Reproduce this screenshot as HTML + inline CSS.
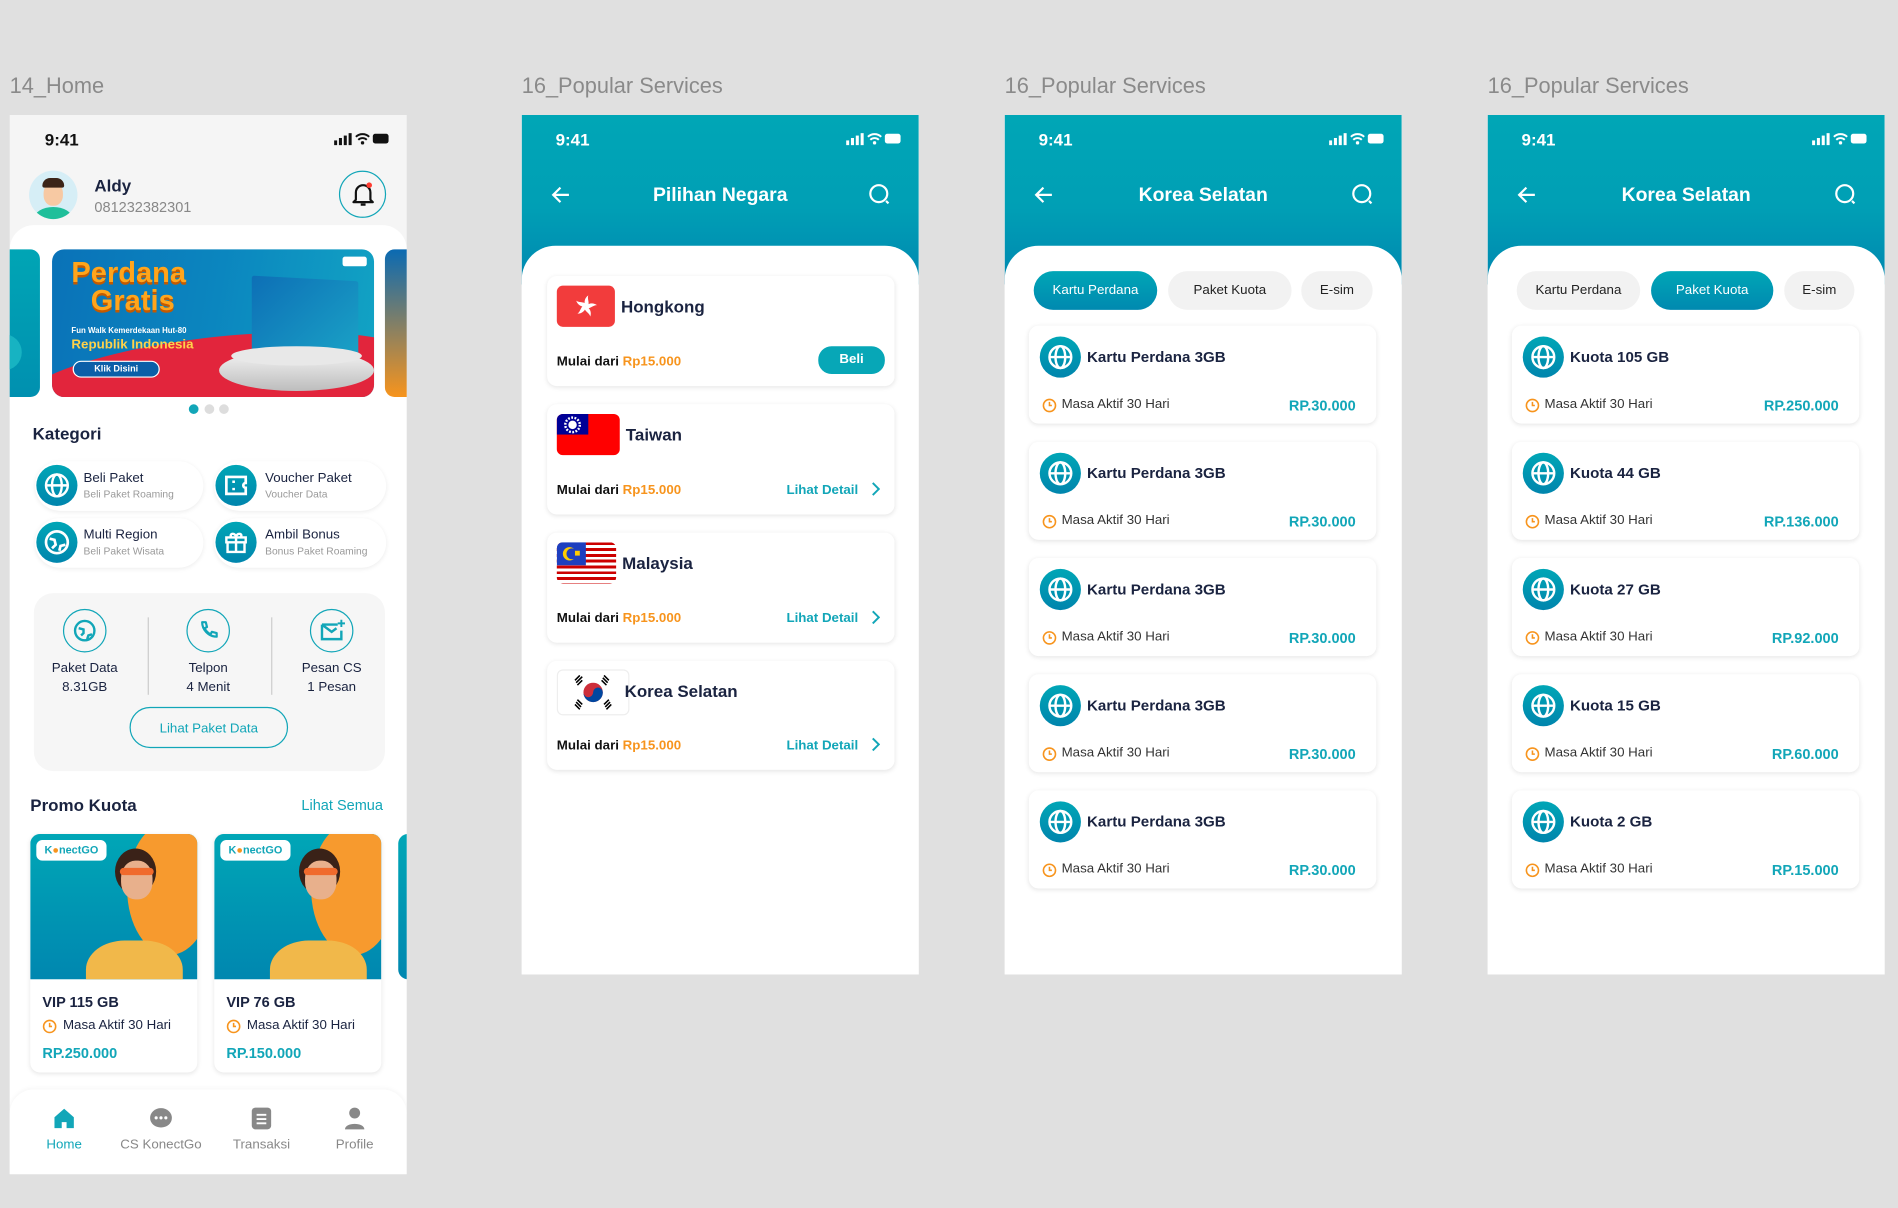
<!DOCTYPE html>
<html><head><meta charset="utf-8"><style>
*{box-sizing:border-box;margin:0;padding:0}
html,body{width:1898px;height:1208px;overflow:hidden;background:#e0e0e0;font-family:"Liberation Sans",sans-serif}
#w{position:absolute;left:0;top:0;width:1568px;height:998px;transform:scale(1.21046);transform-origin:0 0}
.a{position:absolute}
.lbl{font-size:18px;color:#8a8a8a;top:61px}
.ph{position:absolute;top:95px;width:328px;overflow:hidden;background:#fff}
.hdr{position:absolute;left:0;top:0;width:328px;height:140px;background:linear-gradient(#00a6b6 0%,#009fb5 55%,#0087b0 100%)}
.time{position:absolute;top:12px;left:28px;font-size:14px;font-weight:bold;color:#fff}
.ttl{position:absolute;top:58px;left:0;width:328px;text-align:center;font-size:16px;font-weight:bold;color:#fff}
.panel{position:absolute;left:0;top:108px;width:328px;height:700px;background:#fff;border-radius:28px 28px 0 0}
.card{position:absolute;left:21px;width:287px;background:#fff;border-radius:8px;box-shadow:0 1px 4px rgba(0,0,0,.1)}
.flag{position:absolute;left:8px;top:8px;width:48px;height:34px;border-radius:5px;overflow:hidden}
.cn{position:absolute;top:17px;font-size:14px;font-weight:bold;color:#1a2340}
.mul{position:absolute;left:8px;bottom:14px;font-size:11px;font-weight:bold;color:#111}
.mul span{color:#f7941d}
.ld{position:absolute;right:30px;bottom:14px;font-size:11px;font-weight:bold;color:#12a6b8}
.chev{position:absolute;right:12px;bottom:15px}
.tab{position:absolute;top:129px;height:32px;border-radius:16px;font-size:11px;line-height:32px;text-align:center;color:#222;background:#f2f2f2}
.tab.on{background:linear-gradient(#00a6b6,#0089b0);color:#fff}
.pc{position:absolute;left:20px;width:287px;height:81px;background:#fff;border-radius:8px;box-shadow:0 1px 4px rgba(0,0,0,.1)}
.gi{position:absolute;left:9px;top:9px;width:34px;height:34px;border-radius:50%;background:linear-gradient(#00a6b6,#0085ad)}
.pt{position:absolute;left:48px;top:19px;font-size:12.5px;font-weight:bold;color:#1a2340}
.ma{position:absolute;left:27px;top:59px;font-size:11px;color:#333}
.clk{position:absolute;left:11px;top:60px}
.pr{position:absolute;right:17px;top:59px;font-size:12px;font-weight:bold;color:#12a6b8}
.st{position:absolute;right:14px;top:14px}
</style></head><body><div id="w">

<div class="a lbl" style="left:8px">14_Home</div>
<div class="a lbl" style="left:431px">16_Popular Services</div>
<div class="a lbl" style="left:830px">16_Popular Services</div>
<div class="a lbl" style="left:1229px">16_Popular Services</div>

<!-- PHONE 1 -->
<div class="ph" style="left:8px;height:875px;background:#f5f5f5">
 <div class="time" style="color:#111;left:29px">9:41</div>
 <svg class="st" width="46" height="11" viewBox="0 0 46 11"><rect x="0" y="7" width="2.5" height="4" fill="#111"/><rect x="4" y="5" width="2.5" height="6" fill="#111"/><rect x="8" y="3" width="2.5" height="8" fill="#111"/><rect x="12" y="1" width="2.5" height="10" fill="#111"/><path d="M18 4a8 8 0 0 1 11 0M20 6.5a5 5 0 0 1 7 0" stroke="#111" stroke-width="1.6" fill="none"/><circle cx="23.5" cy="9" r="1.4" fill="#111"/><rect x="32" y="1.5" width="13" height="8" rx="2" fill="#111"/></svg>
 <div class="a" style="left:16px;top:46px;width:40px;height:40px;border-radius:50%;background:#d6eef6;overflow:hidden">
  <div class="a" style="left:4px;top:30px;width:32px;height:20px;border-radius:50%;background:#1fbf9a"></div>
  <div class="a" style="left:12px;top:10px;width:16px;height:19px;border-radius:45%;background:#f7c9a3"></div>
  <div class="a" style="left:11px;top:6px;width:18px;height:8px;border-radius:8px 8px 2px 2px;background:#3b2418"></div>
 </div>
 <div class="a" style="left:70px;top:50px;font-size:14px;font-weight:bold;color:#1a2340">Aldy</div>
 <div class="a" style="left:70px;top:69px;font-size:12px;color:#888">081232382301</div>
 <div class="a" style="left:272px;top:46px;width:39px;height:39px;border-radius:50%;border:1.5px solid #12a6b8">
  <svg class="a" style="left:9px;top:8px" width="20" height="22" viewBox="0 0 20 22"><path d="M4 15V9a6 6 0 0 1 12 0v6l2 2H2z" fill="none" stroke="#111" stroke-width="1.8" stroke-linejoin="round"/><path d="M8 19h4" stroke="#111" stroke-width="2"/><circle cx="15" cy="3" r="2.3" fill="#ff3b30"/></svg>
 </div>
 <div class="a" style="left:0;top:91px;width:328px;height:800px;background:#fff;border-radius:20px 20px 0 0"></div>
 <!-- banner -->
 <div class="a" style="left:-10px;top:111px;width:35px;height:122px;border-radius:8px;background:linear-gradient(#00a5b5,#0090b0)"><div class="a" style="left:-10px;top:70px;width:30px;height:30px;border-radius:50%;background:#17b3c2"></div></div>
 <div class="a" style="left:35px;top:111px;width:266px;height:122px;border-radius:10px;overflow:hidden;background:linear-gradient(100deg,#0a72b8,#0b86bf 50%,#12a4c4)">
  <div class="a" style="left:-30px;top:72px;width:340px;height:80px;border-radius:50%;background:#e2253c;transform:rotate(-6deg)"></div>
  <div class="a" style="left:16px;top:8px;font-size:24px;font-weight:bold;color:#ffa51c;line-height:24px;text-shadow:0 2px 0 #c45a00">Perdana</div>
  <div class="a" style="left:32px;top:31px;font-size:24px;font-weight:bold;color:#ffa51c;line-height:24px;text-shadow:0 2px 0 #c45a00">Gratis</div>
  <div class="a" style="left:16px;top:64px;font-size:6.5px;font-weight:bold;color:#fff">Fun Walk Kemerdekaan Hut-80</div>
  <div class="a" style="left:16px;top:73px;font-size:11px;font-weight:bold;color:#ffd24a">Republik Indonesia</div>
  <div class="a" style="left:17px;top:92px;width:72px;height:14px;border-radius:7px;background:#0b5fa8;border:1px solid #fff;font-size:7.5px;font-weight:bold;color:#fff;text-align:center;line-height:12px">Klik Disini</div>
  <div class="a" style="left:165px;top:24px;width:88px;height:62px;background:linear-gradient(135deg,#0d6fb6,#1aa2c6);transform:skewY(3deg);border-radius:2px"></div>
  <div class="a" style="left:138px;top:83px;width:128px;height:34px;border-radius:50%;background:linear-gradient(#f5f5f5,#bdbdbd)"></div>
  <div class="a" style="left:148px;top:80px;width:108px;height:16px;border-radius:50%;background:#e8e8e8"></div>
  <div class="a" style="left:240px;top:6px;width:20px;height:8px;background:#fff;border-radius:2px"></div>
 </div>
 <div class="a" style="left:310px;top:111px;width:30px;height:122px;border-radius:8px;background:linear-gradient(#0a6ab2,#f7941d)"></div>
 <div class="a" style="left:148px;top:239px;width:8px;height:8px;border-radius:50%;background:#12a6b8"></div>
 <div class="a" style="left:161px;top:239px;width:8px;height:8px;border-radius:50%;background:#ddd"></div>
 <div class="a" style="left:173px;top:239px;width:8px;height:8px;border-radius:50%;background:#ddd"></div>
 <div class="a" style="left:19px;top:255px;font-size:14px;font-weight:bold;color:#1a2340">Kategori</div>
 <!-- category pills -->
 <div class="a" style="left:21px;top:286px;width:139px;height:41px;border-radius:21px;background:#fff;box-shadow:0 1px 4px rgba(0,0,0,.08)">
  <div class="gi" style="left:1px;top:3px"><svg width="34" height="34" viewBox="0 0 34 34"><g fill="none" stroke="#fff" stroke-width="2"><circle cx="17" cy="17" r="9"/><ellipse cx="17" cy="17" rx="4" ry="9"/><path d="M8 17h18"/></g></svg></div>
  <div class="a" style="left:40px;top:8px;font-size:11px;color:#1a2340">Beli Paket</div><div class="a" style="left:40px;top:22px;font-size:8.5px;color:#999">Beli Paket Roaming</div></div>
 <div class="a" style="left:169px;top:286px;width:142px;height:41px;border-radius:21px;background:#fff;box-shadow:0 1px 4px rgba(0,0,0,.08)">
  <div class="gi" style="left:1px;top:3px"><svg width="34" height="34" viewBox="0 0 34 34"><path d="M9 10h16v5a2 2 0 0 0 0 4v5H9z M15 13v2M15 19v2" fill="none" stroke="#fff" stroke-width="2.2"/></svg></div>
  <div class="a" style="left:42px;top:8px;font-size:11px;color:#1a2340">Voucher Paket</div><div class="a" style="left:42px;top:22px;font-size:8.5px;color:#999">Voucher Data</div></div>
 <div class="a" style="left:21px;top:333px;width:139px;height:41px;border-radius:21px;background:#fff;box-shadow:0 1px 4px rgba(0,0,0,.08)">
  <div class="gi" style="left:1px;top:3px"><svg width="34" height="34" viewBox="0 0 34 34"><circle cx="17" cy="17" r="9" fill="none" stroke="#fff" stroke-width="2.2"/><path d="M11 14l4 1 1 4-3 3M19 24l1-4 4-1" fill="none" stroke="#fff" stroke-width="2.2"/></svg></div>
  <div class="a" style="left:40px;top:8px;font-size:11px;color:#1a2340">Multi Region</div><div class="a" style="left:40px;top:22px;font-size:8.5px;color:#999">Beli Paket Wisata</div></div>
 <div class="a" style="left:169px;top:333px;width:142px;height:41px;border-radius:21px;background:#fff;box-shadow:0 1px 4px rgba(0,0,0,.08)">
  <div class="gi" style="left:1px;top:3px"><svg width="34" height="34" viewBox="0 0 34 34"><path d="M9 13h16v4H9zM10 17h14v8H10zM17 13v12M13 13c-2-4 4-4 4 0c0-4 6-4 4 0" fill="none" stroke="#fff" stroke-width="2"/></svg></div>
  <div class="a" style="left:42px;top:8px;font-size:11px;color:#1a2340">Ambil Bonus</div><div class="a" style="left:42px;top:22px;font-size:8.5px;color:#999">Bonus Paket Roaming</div></div>
 <!-- stats -->
 <div class="a" style="left:20px;top:395px;width:290px;height:147px;border-radius:16px;background:#f6f6f6">
  <div class="a" style="left:94px;top:20px;width:1px;height:64px;background:#ccc"></div>
  <div class="a" style="left:196px;top:20px;width:1px;height:64px;background:#ccc"></div>
  <div class="a" style="left:24px;top:13px;width:36px;height:36px;border-radius:50%;border:1.3px solid #12a6b8"><svg width="34" height="34" viewBox="0 0 34 34"><circle cx="17" cy="17" r="8" fill="none" stroke="#12a6b8" stroke-width="2"/><path d="M12 15l4 1 0 3-2 2M19 24l1-3 3-1" fill="none" stroke="#12a6b8" stroke-width="2"/></svg></div>
  <div class="a" style="left:126px;top:13px;width:36px;height:36px;border-radius:50%;border:1.3px solid #12a6b8"><svg width="34" height="34" viewBox="0 0 34 34"><path d="M12 10l3 0 1 4-2 1c1 2 3 4 5 5l1-2 4 1v3c-7 0-12-6-12-12z" fill="none" stroke="#12a6b8" stroke-width="1.8" stroke-linejoin="round"/></svg></div>
  <div class="a" style="left:228px;top:13px;width:36px;height:36px;border-radius:50%;border:1.3px solid #12a6b8"><svg width="34" height="34" viewBox="0 0 34 34"><path d="M9 12h13M9 12v12h16v-7M9 12l8 6 4-3" fill="none" stroke="#12a6b8" stroke-width="2"/><path d="M25 8v6M22 11h6" stroke="#12a6b8" stroke-width="1.6"/></svg></div>
  <div class="a" style="left:0;top:54px;width:84px;text-align:center;font-size:11px;color:#1a2340;line-height:16px">Paket Data<br>8.31GB</div>
  <div class="a" style="left:104px;top:54px;width:80px;text-align:center;font-size:11px;color:#1a2340;line-height:16px">Telpon<br>4 Menit</div>
  <div class="a" style="left:206px;top:54px;width:80px;text-align:center;font-size:11px;color:#1a2340;line-height:16px">Pesan CS<br>1 Pesan</div>
  <div class="a" style="left:79px;top:94px;width:131px;height:34px;border-radius:18px;border:1.3px solid #12a6b8;text-align:center;line-height:34px;font-size:11px;color:#12a6b8">Lihat Paket Data</div>
 </div>
 <div class="a" style="left:17px;top:562px;font-size:14px;font-weight:bold;color:#1a2340">Promo Kuota</div>
 <div class="a" style="left:241px;top:563px;font-size:12px;color:#12a6b8">Lihat Semua</div>
 <!-- promo cards -->
 <div class="a" style="left:17px;top:594px;width:138px;height:197px;border-radius:8px;background:#fff;box-shadow:0 1px 4px rgba(0,0,0,.1);overflow:hidden">
  <div class="a" style="left:0;top:0;width:138px;height:120px;background:linear-gradient(#00a6b6,#0087b0);overflow:hidden">
   <div class="a" style="left:80px;top:-10px;width:70px;height:110px;border-radius:50%;background:#f79a2e"></div>
   <div class="a" style="left:46px;top:88px;width:80px;height:60px;border-radius:40% 40% 0 0;background:#f1b84a"></div>
   <div class="a" style="left:70px;top:12px;width:34px;height:38px;border-radius:50%;background:#3a2218"></div>
   <div class="a" style="left:75px;top:22px;width:26px;height:32px;border-radius:45%;background:#e8b08c"></div>
   <div class="a" style="left:74px;top:28px;width:28px;height:6px;background:#f06a2c;border-radius:3px"></div>
   <div class="a" style="left:5px;top:5px;width:58px;height:17px;border-radius:5px;background:#fff;font-size:9px;font-weight:bold;color:#12a6b8;text-align:center;line-height:17px">K<span style="color:#f7941d">●</span>nectGO</div>
  </div>
  <div class="a" style="left:10px;top:132px;font-size:12px;font-weight:bold;color:#1a2340">VIP 115 GB</div>
  <svg class="a" style="left:10px;top:153px" width="12" height="12" viewBox="0 0 12 12"><circle cx="6" cy="6" r="5" fill="none" stroke="#f7941d" stroke-width="1.3"/><path d="M6 3v3h2" fill="none" stroke="#f7941d" stroke-width="1.3"/></svg>
  <div class="a" style="left:27px;top:152px;font-size:11px;color:#1a2340">Masa Aktif 30 Hari</div>
  <div class="a" style="left:10px;top:174px;font-size:12px;font-weight:bold;color:#12a6b8">RP.250.000</div>
 </div>
 <div class="a" style="left:169px;top:594px;width:138px;height:197px;border-radius:8px;background:#fff;box-shadow:0 1px 4px rgba(0,0,0,.1);overflow:hidden">
  <div class="a" style="left:0;top:0;width:138px;height:120px;background:linear-gradient(#00a6b6,#0087b0);overflow:hidden">
   <div class="a" style="left:80px;top:-10px;width:70px;height:110px;border-radius:50%;background:#f79a2e"></div>
   <div class="a" style="left:46px;top:88px;width:80px;height:60px;border-radius:40% 40% 0 0;background:#f1b84a"></div>
   <div class="a" style="left:70px;top:12px;width:34px;height:38px;border-radius:50%;background:#3a2218"></div>
   <div class="a" style="left:75px;top:22px;width:26px;height:32px;border-radius:45%;background:#e8b08c"></div>
   <div class="a" style="left:74px;top:28px;width:28px;height:6px;background:#f06a2c;border-radius:3px"></div>
   <div class="a" style="left:5px;top:5px;width:58px;height:17px;border-radius:5px;background:#fff;font-size:9px;font-weight:bold;color:#12a6b8;text-align:center;line-height:17px">K<span style="color:#f7941d">●</span>nectGO</div>
  </div>
  <div class="a" style="left:10px;top:132px;font-size:12px;font-weight:bold;color:#1a2340">VIP 76 GB</div>
  <svg class="a" style="left:10px;top:153px" width="12" height="12" viewBox="0 0 12 12"><circle cx="6" cy="6" r="5" fill="none" stroke="#f7941d" stroke-width="1.3"/><path d="M6 3v3h2" fill="none" stroke="#f7941d" stroke-width="1.3"/></svg>
  <div class="a" style="left:27px;top:152px;font-size:11px;color:#1a2340">Masa Aktif 30 Hari</div>
  <div class="a" style="left:10px;top:174px;font-size:12px;font-weight:bold;color:#12a6b8">RP.150.000</div>
 </div>
 <div class="a" style="left:321px;top:594px;width:20px;height:120px;border-radius:8px;background:linear-gradient(#00a6b6,#0087b0)"></div>
 <!-- nav -->
 <div class="a" style="left:0;top:805px;width:328px;height:80px;background:#fff;border-radius:20px 20px 0 0;box-shadow:0 -1px 4px rgba(0,0,0,.04)">
  <svg class="a" style="left:35px;top:14px" width="20" height="20" viewBox="0 0 20 20"><path d="M2 9l8-7 8 7v9h-6v-5h-4v5H2z" fill="#12a6b8"/></svg>
  <svg class="a" style="left:115px;top:14px" width="20" height="20" viewBox="0 0 20 20"><ellipse cx="10" cy="9.5" rx="9" ry="8" fill="#888"/><circle cx="6" cy="9.5" r="1.3" fill="#fff"/><circle cx="10" cy="9.5" r="1.3" fill="#fff"/><circle cx="14" cy="9.5" r="1.3" fill="#fff"/></svg>
  <svg class="a" style="left:198px;top:14px" width="20" height="20" viewBox="0 0 20 20"><rect x="2" y="1" width="16" height="18" rx="3" fill="#888"/><path d="M6 7h8M6 10.5h8M6 14h8" stroke="#fff" stroke-width="1.5"/></svg>
  <svg class="a" style="left:275px;top:14px" width="20" height="20" viewBox="0 0 20 20"><circle cx="10" cy="5.5" r="4.5" fill="#888"/><path d="M2 19c0-6 16-6 16 0z" fill="#888"/></svg>
  <div class="a" style="left:10px;top:40px;width:70px;text-align:center;font-size:11px;color:#12a6b8">Home</div>
  <div class="a" style="left:85px;top:40px;width:80px;text-align:center;font-size:11px;color:#888">CS KonectGo</div>
  <div class="a" style="left:168px;top:40px;width:80px;text-align:center;font-size:11px;color:#888">Transaksi</div>
  <div class="a" style="left:250px;top:40px;width:70px;text-align:center;font-size:11px;color:#888">Profile</div>
 </div>
</div>

<!-- PHONE 2 -->
<div class="ph" style="left:431px;height:710px">
 <div class="hdr"></div>
 <div class="time">9:41</div>
 <svg class="st" width="46" height="11" viewBox="0 0 46 11"><rect x="0" y="7" width="2.5" height="4" fill="#fff"/><rect x="4" y="5" width="2.5" height="6" fill="#fff"/><rect x="8" y="3" width="2.5" height="8" fill="#fff"/><rect x="12" y="1" width="2.5" height="10" fill="#fff"/><path d="M18 4a8 8 0 0 1 11 0M20 6.5a5 5 0 0 1 7 0" stroke="#fff" stroke-width="1.6" fill="none"/><circle cx="23.5" cy="9" r="1.4" fill="#fff"/><rect x="32" y="1.5" width="13" height="8" rx="2" fill="#fff"/></svg>
 <svg class="a" style="left:23px;top:58px" width="18" height="16" viewBox="0 0 18 16"><path d="M16 8H3M9 2L3 8l6 6" fill="none" stroke="#fff" stroke-width="1.8"/></svg>
 <div class="ttl">Pilihan Negara</div>
 <svg class="a" style="left:286px;top:56px" width="20" height="20" viewBox="0 0 20 20"><circle cx="9" cy="9" r="7" fill="none" stroke="#fff" stroke-width="1.8"/><path d="M15 15l2 2" stroke="#fff" stroke-width="1.8"/></svg>
 <div class="panel"></div>
 <div class="card" style="top:133px;height:91px">
  <div class="flag" style="background:#f23c3c"><svg width="48" height="34" viewBox="0 0 48 34"><g fill="#fff" transform="translate(24 17)"><g id="pt"><path d="M0 0c-2-3-1-7 2-9c-1 3 1 5 0 9z"/></g><use href="#pt" transform="rotate(72)"/><use href="#pt" transform="rotate(144)"/><use href="#pt" transform="rotate(216)"/><use href="#pt" transform="rotate(288)"/></g></svg></div>
  <div class="cn" style="left:61px">Hongkong</div>
  <div class="mul">Mulai dari <span>Rp15.000</span></div>
  <div class="a" style="right:8px;bottom:10px;width:55px;height:23px;border-radius:11px;background:#07a7b7;color:#fff;font-size:11px;font-weight:bold;text-align:center;line-height:23px">Beli</div>
 </div>
 <div class="card" style="top:239px;height:91px">
  <div class="flag" style="background:#f00;width:52px"><div class="a" style="left:0;top:0;width:26px;height:17px;background:#000096"></div><svg class="a" style="left:5px;top:1px" width="16" height="16" viewBox="0 0 16 16"><circle cx="8" cy="8" r="3.5" fill="#fff"/><circle cx="8" cy="8" r="6" fill="none" stroke="#fff" stroke-width="2" stroke-dasharray="1.5 1.2"/></svg></div>
  <div class="cn" style="left:65px">Taiwan</div>
  <div class="mul">Mulai dari <span>Rp15.000</span></div>
  <div class="ld">Lihat Detail</div>
  <svg class="chev" width="8" height="12" viewBox="0 0 8 12"><path d="M2 1l5 5-5 5" fill="none" stroke="#12a6b8" stroke-width="1.6"/></svg>
 </div>
 <div class="card" style="top:345px;height:91px">
  <div class="flag" style="background:repeating-linear-gradient(#c00 0 2.4px,#fff 2.4px 4.8px);width:49px;height:34px"><div class="a" style="left:0;top:0;width:24px;height:19px;background:#1e3fbf"></div><div class="a" style="left:5px;top:4px;width:11px;height:11px;border-radius:50%;background:#fc0"></div><div class="a" style="left:8px;top:5px;width:9px;height:9px;border-radius:50%;background:#1e3fbf"></div><div class="a" style="left:15px;top:7px;width:4px;height:4px;background:#fc0"></div></div>
  <div class="cn" style="left:62px">Malaysia</div>
  <div class="mul">Mulai dari <span>Rp15.000</span></div>
  <div class="ld">Lihat Detail</div>
  <svg class="chev" width="8" height="12" viewBox="0 0 8 12"><path d="M2 1l5 5-5 5" fill="none" stroke="#12a6b8" stroke-width="1.6"/></svg>
 </div>
 <div class="card" style="top:451px;height:90px">
  <div class="flag" style="background:#fff;border:1px solid #eee;width:60px;height:38px;top:7px"><svg width="58" height="36" viewBox="0 0 58 36"><circle cx="29" cy="18" r="8" fill="#cd2e3a"/><path d="M21 18a8 8 0 0 0 16 0a4 4 0 0 0-8 0a4 4 0 0 1-8 0z" fill="#0047a0"/><g stroke="#000" stroke-width="1.3"><path d="M14 8l4-4M15 10l5-5M16 12l4-4M38 4l4 4M37 6l4 4M36 8l4 4M14 28l4 4M15 26l4 4M16 24l4 4M38 28l4-4M39 30l4-4M40 32l4-4"/></g></svg></div>
  <div class="cn" style="left:64px">Korea Selatan</div>
  <div class="mul">Mulai dari <span>Rp15.000</span></div>
  <div class="ld">Lihat Detail</div>
  <svg class="chev" width="8" height="12" viewBox="0 0 8 12"><path d="M2 1l5 5-5 5" fill="none" stroke="#12a6b8" stroke-width="1.6"/></svg>
 </div>
</div>

<!-- PHONE 3 -->
<div class="ph" style="left:830px;height:710px">
 <div class="hdr"></div>
 <div class="time">9:41</div>
 <svg class="st" width="46" height="11" viewBox="0 0 46 11"><rect x="0" y="7" width="2.5" height="4" fill="#fff"/><rect x="4" y="5" width="2.5" height="6" fill="#fff"/><rect x="8" y="3" width="2.5" height="8" fill="#fff"/><rect x="12" y="1" width="2.5" height="10" fill="#fff"/><path d="M18 4a8 8 0 0 1 11 0M20 6.5a5 5 0 0 1 7 0" stroke="#fff" stroke-width="1.6" fill="none"/><circle cx="23.5" cy="9" r="1.4" fill="#fff"/><rect x="32" y="1.5" width="13" height="8" rx="2" fill="#fff"/></svg>
 <svg class="a" style="left:23px;top:58px" width="18" height="16" viewBox="0 0 18 16"><path d="M16 8H3M9 2L3 8l6 6" fill="none" stroke="#fff" stroke-width="1.8"/></svg>
 <div class="ttl">Korea Selatan</div>
 <svg class="a" style="left:286px;top:56px" width="20" height="20" viewBox="0 0 20 20"><circle cx="9" cy="9" r="7" fill="none" stroke="#fff" stroke-width="1.8"/><path d="M15 15l2 2" stroke="#fff" stroke-width="1.8"/></svg>
 <div class="panel"></div>
 <div class="tab on" style="left:24px;width:102px">Kartu Perdana</div>
 <div class="tab" style="left:135px;width:102px">Paket Kuota</div>
 <div class="tab" style="left:245px;width:59px">E-sim</div>
 <div class="pc" style="top:174px"><div class="gi"><svg width="34" height="34" viewBox="0 0 34 34"><g fill="none" stroke="#fff" stroke-width="2"><circle cx="17" cy="17" r="9"/><ellipse cx="17" cy="17" rx="4" ry="9"/><path d="M8 17h18"/></g></svg></div><div class="pt">Kartu Perdana 3GB</div><svg class="clk" width="12" height="12" viewBox="0 0 12 12"><circle cx="6" cy="6" r="5" fill="none" stroke="#f7941d" stroke-width="1.3"/><path d="M6 3v3h2" fill="none" stroke="#f7941d" stroke-width="1.3"/></svg><div class="ma">Masa Aktif 30 Hari</div><div class="pr">RP.30.000</div></div>
 <div class="pc" style="top:270px"><div class="gi"><svg width="34" height="34" viewBox="0 0 34 34"><g fill="none" stroke="#fff" stroke-width="2"><circle cx="17" cy="17" r="9"/><ellipse cx="17" cy="17" rx="4" ry="9"/><path d="M8 17h18"/></g></svg></div><div class="pt">Kartu Perdana 3GB</div><svg class="clk" width="12" height="12" viewBox="0 0 12 12"><circle cx="6" cy="6" r="5" fill="none" stroke="#f7941d" stroke-width="1.3"/><path d="M6 3v3h2" fill="none" stroke="#f7941d" stroke-width="1.3"/></svg><div class="ma">Masa Aktif 30 Hari</div><div class="pr">RP.30.000</div></div>
 <div class="pc" style="top:366px"><div class="gi"><svg width="34" height="34" viewBox="0 0 34 34"><g fill="none" stroke="#fff" stroke-width="2"><circle cx="17" cy="17" r="9"/><ellipse cx="17" cy="17" rx="4" ry="9"/><path d="M8 17h18"/></g></svg></div><div class="pt">Kartu Perdana 3GB</div><svg class="clk" width="12" height="12" viewBox="0 0 12 12"><circle cx="6" cy="6" r="5" fill="none" stroke="#f7941d" stroke-width="1.3"/><path d="M6 3v3h2" fill="none" stroke="#f7941d" stroke-width="1.3"/></svg><div class="ma">Masa Aktif 30 Hari</div><div class="pr">RP.30.000</div></div>
 <div class="pc" style="top:462px"><div class="gi"><svg width="34" height="34" viewBox="0 0 34 34"><g fill="none" stroke="#fff" stroke-width="2"><circle cx="17" cy="17" r="9"/><ellipse cx="17" cy="17" rx="4" ry="9"/><path d="M8 17h18"/></g></svg></div><div class="pt">Kartu Perdana 3GB</div><svg class="clk" width="12" height="12" viewBox="0 0 12 12"><circle cx="6" cy="6" r="5" fill="none" stroke="#f7941d" stroke-width="1.3"/><path d="M6 3v3h2" fill="none" stroke="#f7941d" stroke-width="1.3"/></svg><div class="ma">Masa Aktif 30 Hari</div><div class="pr">RP.30.000</div></div>
 <div class="pc" style="top:558px"><div class="gi"><svg width="34" height="34" viewBox="0 0 34 34"><g fill="none" stroke="#fff" stroke-width="2"><circle cx="17" cy="17" r="9"/><ellipse cx="17" cy="17" rx="4" ry="9"/><path d="M8 17h18"/></g></svg></div><div class="pt">Kartu Perdana 3GB</div><svg class="clk" width="12" height="12" viewBox="0 0 12 12"><circle cx="6" cy="6" r="5" fill="none" stroke="#f7941d" stroke-width="1.3"/><path d="M6 3v3h2" fill="none" stroke="#f7941d" stroke-width="1.3"/></svg><div class="ma">Masa Aktif 30 Hari</div><div class="pr">RP.30.000</div></div>
</div>

<!-- PHONE 4 -->
<div class="ph" style="left:1229px;height:710px">
 <div class="hdr"></div>
 <div class="time">9:41</div>
 <svg class="st" width="46" height="11" viewBox="0 0 46 11"><rect x="0" y="7" width="2.5" height="4" fill="#fff"/><rect x="4" y="5" width="2.5" height="6" fill="#fff"/><rect x="8" y="3" width="2.5" height="8" fill="#fff"/><rect x="12" y="1" width="2.5" height="10" fill="#fff"/><path d="M18 4a8 8 0 0 1 11 0M20 6.5a5 5 0 0 1 7 0" stroke="#fff" stroke-width="1.6" fill="none"/><circle cx="23.5" cy="9" r="1.4" fill="#fff"/><rect x="32" y="1.5" width="13" height="8" rx="2" fill="#fff"/></svg>
 <svg class="a" style="left:23px;top:58px" width="18" height="16" viewBox="0 0 18 16"><path d="M16 8H3M9 2L3 8l6 6" fill="none" stroke="#fff" stroke-width="1.8"/></svg>
 <div class="ttl">Korea Selatan</div>
 <svg class="a" style="left:286px;top:56px" width="20" height="20" viewBox="0 0 20 20"><circle cx="9" cy="9" r="7" fill="none" stroke="#fff" stroke-width="1.8"/><path d="M15 15l2 2" stroke="#fff" stroke-width="1.8"/></svg>
 <div class="panel"></div>
 <div class="tab" style="left:24px;width:102px">Kartu Perdana</div>
 <div class="tab on" style="left:135px;width:101px">Paket Kuota</div>
 <div class="tab" style="left:245px;width:58px">E-sim</div>
 <div class="pc" style="top:174px"><div class="gi"><svg width="34" height="34" viewBox="0 0 34 34"><g fill="none" stroke="#fff" stroke-width="2"><circle cx="17" cy="17" r="9"/><ellipse cx="17" cy="17" rx="4" ry="9"/><path d="M8 17h18"/></g></svg></div><div class="pt">Kuota 105 GB</div><svg class="clk" width="12" height="12" viewBox="0 0 12 12"><circle cx="6" cy="6" r="5" fill="none" stroke="#f7941d" stroke-width="1.3"/><path d="M6 3v3h2" fill="none" stroke="#f7941d" stroke-width="1.3"/></svg><div class="ma">Masa Aktif 30 Hari</div><div class="pr">RP.250.000</div></div>
 <div class="pc" style="top:270px"><div class="gi"><svg width="34" height="34" viewBox="0 0 34 34"><g fill="none" stroke="#fff" stroke-width="2"><circle cx="17" cy="17" r="9"/><ellipse cx="17" cy="17" rx="4" ry="9"/><path d="M8 17h18"/></g></svg></div><div class="pt">Kuota 44 GB</div><svg class="clk" width="12" height="12" viewBox="0 0 12 12"><circle cx="6" cy="6" r="5" fill="none" stroke="#f7941d" stroke-width="1.3"/><path d="M6 3v3h2" fill="none" stroke="#f7941d" stroke-width="1.3"/></svg><div class="ma">Masa Aktif 30 Hari</div><div class="pr">RP.136.000</div></div>
 <div class="pc" style="top:366px"><div class="gi"><svg width="34" height="34" viewBox="0 0 34 34"><g fill="none" stroke="#fff" stroke-width="2"><circle cx="17" cy="17" r="9"/><ellipse cx="17" cy="17" rx="4" ry="9"/><path d="M8 17h18"/></g></svg></div><div class="pt">Kuota 27 GB</div><svg class="clk" width="12" height="12" viewBox="0 0 12 12"><circle cx="6" cy="6" r="5" fill="none" stroke="#f7941d" stroke-width="1.3"/><path d="M6 3v3h2" fill="none" stroke="#f7941d" stroke-width="1.3"/></svg><div class="ma">Masa Aktif 30 Hari</div><div class="pr">RP.92.000</div></div>
 <div class="pc" style="top:462px"><div class="gi"><svg width="34" height="34" viewBox="0 0 34 34"><g fill="none" stroke="#fff" stroke-width="2"><circle cx="17" cy="17" r="9"/><ellipse cx="17" cy="17" rx="4" ry="9"/><path d="M8 17h18"/></g></svg></div><div class="pt">Kuota 15 GB</div><svg class="clk" width="12" height="12" viewBox="0 0 12 12"><circle cx="6" cy="6" r="5" fill="none" stroke="#f7941d" stroke-width="1.3"/><path d="M6 3v3h2" fill="none" stroke="#f7941d" stroke-width="1.3"/></svg><div class="ma">Masa Aktif 30 Hari</div><div class="pr">RP.60.000</div></div>
 <div class="pc" style="top:558px"><div class="gi"><svg width="34" height="34" viewBox="0 0 34 34"><g fill="none" stroke="#fff" stroke-width="2"><circle cx="17" cy="17" r="9"/><ellipse cx="17" cy="17" rx="4" ry="9"/><path d="M8 17h18"/></g></svg></div><div class="pt">Kuota 2 GB</div><svg class="clk" width="12" height="12" viewBox="0 0 12 12"><circle cx="6" cy="6" r="5" fill="none" stroke="#f7941d" stroke-width="1.3"/><path d="M6 3v3h2" fill="none" stroke="#f7941d" stroke-width="1.3"/></svg><div class="ma">Masa Aktif 30 Hari</div><div class="pr">RP.15.000</div></div>
</div>

</div></body></html>
